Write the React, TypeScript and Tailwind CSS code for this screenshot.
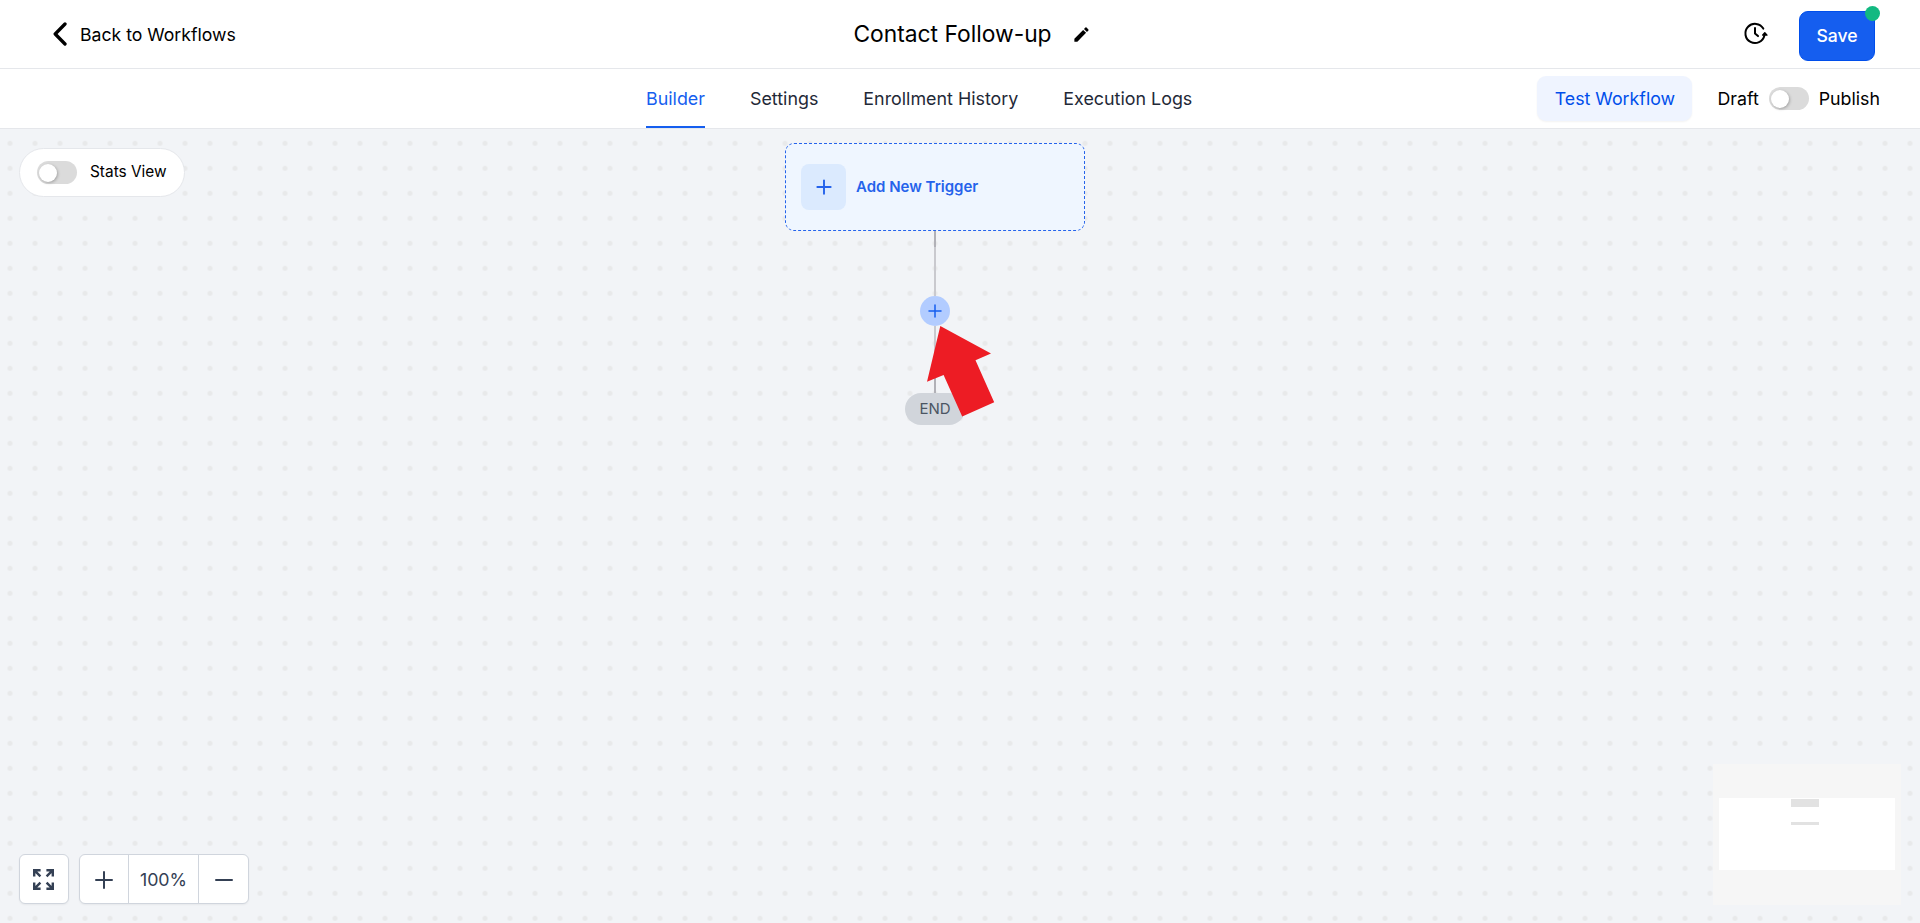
import { MdEdit } from "react-icons/md";

const tabs = [
  { name: "Builder", active: true },
  { name: "Settings", active: false },
  { name: "Enrollment History", active: false },
  { name: "Execution Logs", active: false },
];

function Toggle() {
  return (
    <span className="flex h-[23px] w-10 items-center rounded-full bg-[#dbdbdb] px-[2px]">
      <span className="h-[18px] w-[18px] rounded-full bg-white shadow-[1px_1px_3px_rgba(0,0,0,0.25)]" />
    </span>
  );
}

function BackIcon() {
  return (
    <svg width="14" height="24" viewBox="0 0 14 24" fill="none" stroke="black" strokeWidth="3.3" strokeLinecap="round" strokeLinejoin="round">
      <path d="M12 2L2.2 12L12 22" />
    </svg>
  );
}

function HistoryIcon() {
  return (
    <svg width="25" height="24" viewBox="0 0 25 24" fill="none" stroke="black" strokeWidth="2" strokeLinecap="round" strokeLinejoin="round">
      <path d="M20.3 6.6A9.6 9.6 0 1 0 21.4 13.5" />
      <path d="M12 6v5.5l3 2.6" />
      <path d="M19.6 13.1l2.2-2.4 2.2 2.4z" fill="black" strokeWidth="1.4" />
    </svg>
  );
}

function PlusIcon({ size, stroke }: { size: number; stroke: number }) {
  return (
    <svg width={size} height={size} viewBox="0 0 24 24" fill="none" stroke="currentColor" strokeWidth={stroke} strokeLinecap="round">
      <path d="M12 4v16M4 12h16" />
    </svg>
  );
}

function ExpandIcon() {
  return (
    <svg width="21" height="21" viewBox="0 0 21 21" fill="none" stroke="currentColor" strokeWidth="2.4">
      <path d="M1.2 7.6V1.2H7.6M1.2 1.2l6.2 6.2" />
      <path d="M13.4 1.2h6.4V7.6M19.8 1.2l-6.2 6.2" />
      <path d="M1.2 13.4v6.4H7.6M1.2 19.8l6.2-6.2" />
      <path d="M13.4 19.8h6.4V13.4M19.8 19.8l-6.2-6.2" />
    </svg>
  );
}

function Header() {
  return (
    <header className="flex h-[69px] shrink-0 items-center justify-between border-b border-[#e5e7eb] bg-white pr-[45px] pl-[53px]">
      <button className="flex w-[400px] items-center pt-px">
        <BackIcon />
        <span className="ml-[13px] pt-px text-[17.65px]">Back to Workflows</span>
      </button>
      <div className="flex items-center pl-4">
        <h1 className="text-[22.8px]">Contact Follow-up</h1>
        <MdEdit className="ml-[20px] h-[19px] w-[19px]" />
      </div>
      <div className="flex w-[400px] items-center justify-end">
        <HistoryIcon />
        <button className="relative mt-[3px] ml-[31px] h-[50px] w-[76px] rounded-[9px] border border-[#004eeb] bg-[#155eef] pt-px text-[17.6px] font-medium text-white">
          Save
          <span className="absolute -top-[6px] -right-[6px] h-[15px] w-[15px] rounded-full bg-[#12b981]" />
        </button>
      </div>
    </header>
  );
}

function TabBar() {
  return (
    <nav className="flex h-[60px] shrink-0 justify-between border-b border-[#e5e7eb] bg-white pr-10 pl-[646px]">
      <div className="flex gap-[45px]">
        {tabs.map((tab) => (
          <a
            key={tab.name}
            className={
              tab.active
                ? "flex items-center border-b-2 border-[#155eef] pt-[3px] text-[17.87px] text-[#155eef]"
                : "flex items-center border-b-2 border-transparent pt-[3px] text-[17.87px] text-[#1f2937]"
            }
          >
            {tab.name}
          </a>
        ))}
      </div>
      <div className="flex items-center text-[17.8px]">
        <button className="h-[45px] w-[155px] rounded-[9px] bg-[#eff4ff] pt-px text-[#004eeb] shadow-xs">
          Test Workflow
        </button>
        <span className="mr-[10px] ml-[25px] pt-px">Draft</span>
        <Toggle />
        <span className="ml-[10px] pt-px">Publish</span>
      </div>
    </nav>
  );
}

function Dots() {
  return (
    <svg className="absolute inset-0 h-full w-full">
      <pattern id="dots" width="25" height="25" x="-2.5" y="1.8" patternUnits="userSpaceOnUse">
        <circle cx="12.5" cy="12.5" r="2.5" fill="#e8e9ea" />
      </pattern>
      <rect width="100%" height="100%" fill="url(#dots)" />
    </svg>
  );
}

function Flow() {
  return (
    <div className="absolute top-[14px] left-[785px] flex w-[300px] flex-col items-center">
      <div className="flex h-[88px] w-full items-center rounded-[9px] border border-dashed border-[#2563eb] bg-[#eff6ff] pl-[15px] text-[#2563eb]">
        <span className="flex h-[46px] w-[45px] items-center justify-center rounded-lg bg-[#dbeafe]">
          <PlusIcon size={20} stroke={2.3} />
        </span>
        <span className="ml-[10px] text-[15px] font-semibold">Add New Trigger</span>
      </div>
      <span className="h-4 w-[2px] bg-[#b1b1b7]" />
      <span className="h-[49px] w-[2px] bg-[#c9c9ce]" />
      <span className="flex h-[30px] w-[30px] items-center justify-center rounded-full bg-[#b2ccff] text-[#155eef]">
        <PlusIcon size={18} stroke={2} />
      </span>
      <span className="h-[52px] w-[2px] bg-[#c9c9ce]" />
      <span className="h-[15px] w-[2px] bg-[#b1b1b7]" />
      <span className="flex h-8 w-[60px] items-center justify-center rounded-full bg-[#d1d5db] text-[15px] text-[#4b5563]">
        END
      </span>
    </div>
  );
}

function Pointer() {
  return (
    <svg className="absolute top-[197px] left-[926px]" width="70" height="92" viewBox="0 0 70 92">
      <path d="M14.3 0L65 27.5L49.5 34.3L68.2 76.3L36.2 90.5L17.6 49L1 55.7Z" fill="#ed1c24" />
    </svg>
  );
}

function MiniMap() {
  return (
    <div className="absolute right-[19px] bottom-[18px] h-[141px] w-[188px] bg-[#f6f6f6] px-[6px] pt-[34px]">
      <div className="flex h-[72px] flex-col bg-white pt-px pl-[72px]">
        <span className="h-2 w-7 bg-[#e2e2e2]" />
        <span className="mt-[15px] h-[3px] w-7 bg-[#e2e2e2]" />
      </div>
    </div>
  );
}

function ZoomControls() {
  return (
    <div className="absolute bottom-[19px] left-[19px] flex gap-[10px] text-[#344054]">
      <button className="flex h-[50px] w-[50px] items-center justify-center rounded-md border border-[#d0d5dd] bg-white pt-px pr-px shadow-xs">
        <ExpandIcon />
      </button>
      <div className="flex h-[50px] w-[170px] rounded-md border border-[#d0d5dd] bg-white shadow-xs">
        <button className="flex w-[49px] items-center justify-center border-r border-[#d0d5dd] pt-px pr-px">
          <PlusIcon size={24} stroke={2} />
        </button>
        <span className="flex w-[70px] items-center justify-center border-r border-[#d0d5dd] pt-[2px] text-[17.8px]">100%</span>
        <button className="flex flex-1 items-center justify-center pt-px">
          <svg width="24" height="24" viewBox="0 0 24 24" stroke="currentColor" strokeWidth="2" strokeLinecap="round">
            <path d="M4 12h16" />
          </svg>
        </button>
      </div>
    </div>
  );
}

export default function App() {
  return (
    <div className="flex h-[923px] w-[1920px] flex-col overflow-hidden font-['Inter',sans-serif] text-black">
      <Header />
      <TabBar />
      <main className="relative flex-1 bg-[#f2f4f7]">
        <Dots />
        <Flow />
        <div className="absolute top-[19px] left-[19px] flex h-[49px] w-[166px] items-center rounded-full border border-[#e5e7eb] bg-white pl-[17px]">
          <Toggle />
          <span className="ml-[13px] pb-[2px] text-[15.4px]">Stats View</span>
        </div>
        <ZoomControls />
        <MiniMap />
        <Pointer />
      </main>
    </div>
  );
}
